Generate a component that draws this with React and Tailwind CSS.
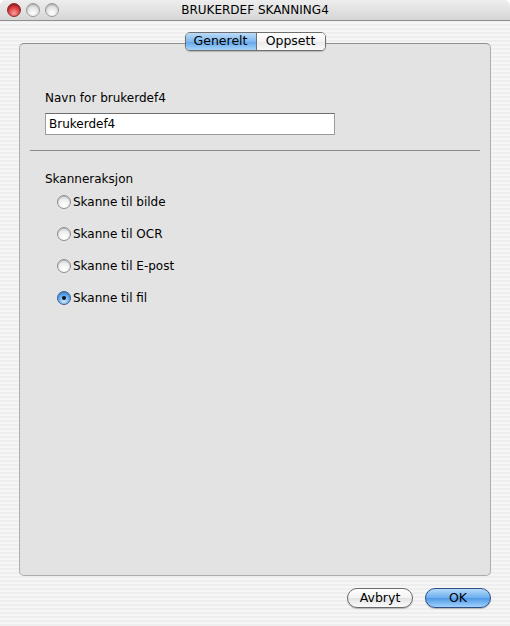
import { useState } from 'react';

const options = ['Skanne til bilde', 'Skanne til OCR', 'Skanne til E-post', 'Skanne til fil'];

const Light = ({ red }) => (
  <span
    className={
      red
        ? 'block h-[14px] w-[14px] rounded-full border border-[#8a2a2a] bg-[radial-gradient(circle_at_50%_75%,#f7a0a0,#d9363a_55%,#9c1f22)] shadow-[inset_0_1px_1px_rgba(0,0,0,0.3)]'
        : 'block h-[14px] w-[14px] rounded-full border border-[#9a9a9a] bg-[radial-gradient(circle_at_50%_75%,#ffffff,#e2e2e2_55%,#bdbdbd)] shadow-[inset_0_1px_1px_rgba(0,0,0,0.2)]'
    }
  />
);

const Radio = ({ checked, label, onClick }) => (
  <button type="button" onClick={onClick} className="flex h-[32px] items-center gap-[2px] pl-[37px] text-left">
    {checked ? (
      <span className="flex h-[14px] w-[14px] items-center justify-center rounded-full border border-[#3a5d8f] bg-[radial-gradient(circle_at_50%_75%,#cde8fb,#5ea6ec_55%,#2b6fc2)]">
        <span className="block h-[4px] w-[4px] rounded-full bg-[#111]" />
      </span>
    ) : (
      <span className="block h-[14px] w-[14px] rounded-full border border-[#8c8c8c] bg-[radial-gradient(circle_at_50%_80%,#ffffff,#f0f0f0_50%,#c9c9c9)] shadow-[inset_0_1px_1px_rgba(0,0,0,0.15)]" />
    )}
    <span>{label}</span>
  </button>
);

export default function App() {
  const [tab, setTab] = useState('Generelt');
  const [name, setName] = useState('Brukerdef4');
  const [choice, setChoice] = useState(3);

  return (
    <div className="flex h-[626px] w-[510px] flex-col overflow-hidden rounded-t-[6px] bg-[repeating-linear-gradient(#eeeeee_0px,#eeeeee_2px,#f6f6f6_2px,#f6f6f6_4px)] font-['DejaVu_Sans',sans-serif] text-[12px] text-black">
      <div className="relative flex h-[21px] shrink-0 items-center justify-center border-b border-[#8f8f8f] bg-[linear-gradient(#eeeeee,#d6d6d6)]">
        <div className="absolute left-[7px] top-[3px] flex gap-[5px]">
          <Light red />
          <Light />
          <Light />
        </div>
        <span className="text-[12px]">BRUKERDEF SKANNING4</span>
      </div>

      <div className="relative z-10 mt-[11px] flex justify-center">
        <div className="flex h-[19px] overflow-hidden rounded-[5px] border border-[#6f6f6f] shadow-[0_1px_1px_rgba(0,0,0,0.2)]">
          {['Generelt', 'Oppsett'].map((t, i) => (
            <button
              key={t}
              type="button"
              onClick={() => setTab(t)}
              className={
                (tab === t
                  ? 'bg-[linear-gradient(#bcdcf8,#7fb8ee_50%,#5fa3e8_50%,#a6d4fa)] '
                  : 'bg-[linear-gradient(#ffffff,#f4f4f4_50%,#e9e9e9_50%,#fafafa)] ') +
                (i === 0 ? 'w-[71px] border-r border-[#6f6f6f] ' : 'w-[68px] ') +
                'flex items-center justify-center text-[12.5px] leading-none'
              }
            >
              {t}
            </button>
          ))}
        </div>
      </div>

      <div className="-mt-[8px] ml-[19px] flex h-[533px] w-[472px] flex-col rounded-[5px] border border-[#acacac] border-t-[#8e8e8e] bg-[#e3e3e3] pt-[46px]">
        <div className="px-[25px]">
          <div className="leading-[16px]">Navn for brukerdef4</div>
          <input
            value={name}
            onChange={(e) => setName(e.target.value)}
            className="mt-[7px] h-[22px] w-[290px] border border-[#9c9c9c] border-t-[#6e6e6e] bg-white px-[3px] text-[12px] outline-none"
          />
        </div>
        <div className="mx-[10px] mt-[15px] h-px bg-[#8a8a8a]" />
        <div className="mt-[20px] px-[25px] leading-[16px]">Skanneraksjon</div>
        <div className="-mt-[1px] flex flex-col">
          {options.map((o, i) => (
            <Radio key={o} label={o} checked={choice === i} onClick={() => setChoice(i)} />
          ))}
        </div>
      </div>

      <div className="mt-[12px] flex justify-end gap-[12px] pr-[19px]">
        <button
          type="button"
          className="flex h-[20px] w-[66px] items-center justify-center rounded-full border border-[#6a6a6a] bg-[linear-gradient(#ffffff,#f2f2f2_50%,#e2e2e2_50%,#fbfbfb)] text-[12.5px] shadow-[0_1px_1px_rgba(0,0,0,0.25)]"
        >
          Avbryt
        </button>
        <button
          type="button"
          className="flex h-[20px] w-[66px] items-center justify-center rounded-full border border-[#2e4f86] bg-[linear-gradient(#b5daf9,#6aaeef_50%,#4d97e6_50%,#9fd1fb)] text-[12.5px] shadow-[0_1px_1px_rgba(0,0,0,0.25)]"
        >
          OK
        </button>
      </div>
    </div>
  );
}
